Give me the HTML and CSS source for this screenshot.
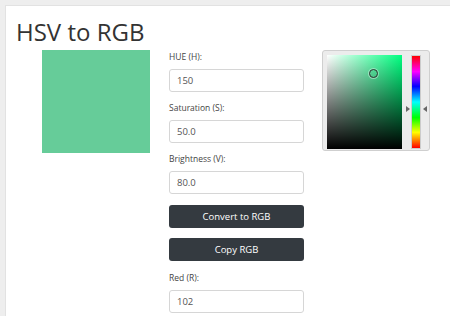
FILE: index.html
```html
<!DOCTYPE html>
<html lang="en">

<head>
    <meta charset="UTF-8">
    <meta name="viewport" content="width=device-width, initial-scale=1.0">
    <title>HSV to RGB</title>
    <link rel="stylesheet" href="styles.css">
</head>

<body>
    <div class="page">
        <h1>HSV to RGB</h1>
        <div class="tool">
            <div class="swatch"></div>

            <form class="fields">
                <label for="hue">HUE (H):</label>
                <input type="text" id="hue" value="150">

                <label for="sat">Saturation (S):</label>
                <input type="text" id="sat" value="50.0">

                <label for="val">Brightness (V):</label>
                <input type="text" id="val" value="80.0">

                <button type="button" class="btn">Convert to RGB</button>
                <button type="button" class="btn">Copy RGB</button>

                <label for="red" class="after-btn">Red (R):</label>
                <input type="text" id="red" value="102">
            </form>

            <!-- color picker -->
            <div class="picker">
                <div class="sv">
                    <span class="cursor"></span>
                </div>
                <div class="hue-wrap">
                    <span class="arrow left"></span>
                    <div class="hue"></div>
                    <span class="arrow right"></span>
                </div>
            </div>
        </div>
    </div>
</body>

</html>
```

FILE: styles.css
```css
html,
body {
    margin: 0;
    padding: 0;
}

body {
    font-family: "Open Sans", "Noto Sans", sans-serif;
    background-color: #eeeeee;
    height: 316px;
    overflow: hidden;
}

.page {
    margin: 5px 0 0 5px;
    background-color: white;
    border-top: 1px solid #e2e2e2;
    border-left: 1px solid #e2e2e2;
    height: 320px;
    padding-left: 10px;
}

h1 {
    margin: 0;
    padding-top: 11px;
    font-size: 24px;
    font-weight: normal;
    color: #333;
    line-height: 30px;
}

.tool {
    display: flex;
    align-items: flex-start;
    margin-top: 3px;
    padding-left: 26px;
}

.swatch {
    width: 108px;
    height: 103px;
    background-color: #66cc99;
}

.fields {
    width: 135px;
    margin-left: 19px;
    display: flex;
    flex-direction: column;
}

label {
    font-size: 8.5px;
    color: #444;
    line-height: 12px;
    margin-top: 10px;
    margin-bottom: 6px;
}

label:first-child {
    margin-top: 1px;
}

label.after-btn {
    margin-top: 11px;
}

input[type="text"] {
    height: 23px;
    box-sizing: border-box;
    border: 1px solid #d6d6d6;
    border-radius: 3px;
    padding: 0 7px;
    font-family: inherit;
    font-size: 9.5px;
    color: #555;
}

.btn {
    height: 23px;
    margin-top: 11px;
    background-color: #343a40;
    color: white;
    border: none;
    border-radius: 3px;
    font-family: inherit;
    font-size: 9.5px;
}

.btn + .btn {
    margin-top: 10px;
}

.picker {
    margin-left: 18px;
    width: 108px;
    height: 101px;
    box-sizing: border-box;
    border: 1px solid #cfcfcf;
    border-radius: 3px;
    background-color: #ececec;
    padding: 4px;
    display: flex;
}

.sv {
    position: relative;
    width: 75px;
    height: 94px;
    background: linear-gradient(to bottom, rgba(0, 0, 0, 0), #000),
        linear-gradient(to right, #fff, #00ff80);
}

.cursor {
    position: absolute;
    left: 42px;
    top: 14px;
    width: 7px;
    height: 7px;
    border: 1px solid #333;
    border-radius: 50%;
    box-shadow: 0 0 0 1px rgba(255, 255, 255, 0.4);
}

.hue-wrap {
    position: relative;
    margin-left: 9px;
    width: 10px;
}

.hue {
    width: 10px;
    height: 94px;
    box-sizing: border-box;
    border: 1px solid #ccc;
    background: linear-gradient(to bottom, #ff0000, #ff00ff 17%, #0000ff 33%, #00ffff 50%, #00ff00 67%, #ffff00 83%, #ff0000);
}

.arrow {
    position: absolute;
    top: 51px;
    width: 0;
    height: 0;
    border-top: 3px solid transparent;
    border-bottom: 3px solid transparent;
}

.arrow.left {
    left: -5px;
    border-left: 4px solid #666;
}

.arrow.right {
    right: -6px;
    border-right: 4px solid #666;
}
```
